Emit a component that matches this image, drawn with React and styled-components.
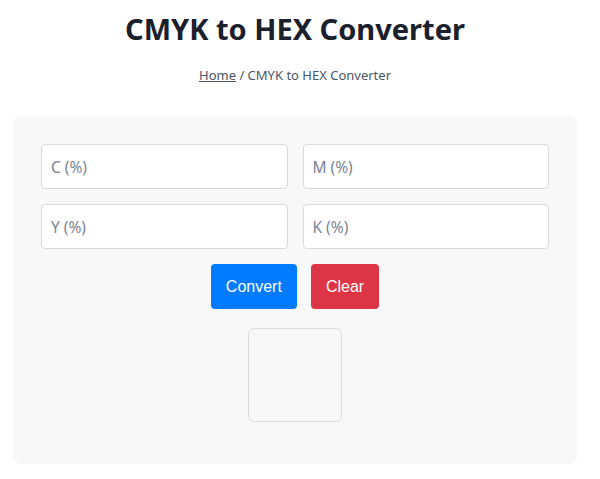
import styled, { createGlobalStyle } from "styled-components";

const GlobalStyle = createGlobalStyle`
  html, body { margin: 0; padding: 0; background: #fff; }
  body { font-family: "Noto Sans", "Open Sans", sans-serif; color: #1a202c; }
  * { box-sizing: border-box; }
`;

const Page = styled.div`
  padding: 0 23px 16px 13px;
`;

const Title = styled.h1`
  margin: 0;
  padding-top: 9px;
  text-align: center;
  font-size: 29px;
  line-height: 40px;
  font-weight: 700;
  color: #1a202c;
`;

const Crumbs = styled.nav`
  margin-top: 16px;
  text-align: center;
  font-size: 13px;
  line-height: 20px;
  color: #4a5568;
`;

const CrumbLink = styled.a`
  color: #4a5568;
  text-decoration: underline;
`;

const Card = styled.div`
  margin-top: 31px;
  background: #f8f8f8;
  border-radius: 8px;
  padding: 28px 28px 42px;
  display: flex;
  flex-direction: column;
  align-items: center;
`;

const Grid = styled.div`
  width: 100%;
  display: grid;
  grid-template-columns: 1fr 1fr;
  gap: 15px;
`;

const Input = styled.input`
  height: 45px;
  padding: 0 9px;
  border: 1px solid #d9d9d9;
  border-radius: 4px;
  background: #fff;
  font-family: "Noto Sans", "Open Sans", sans-serif;
  font-size: 15.5px;
  color: #1a202c;
  &::placeholder { color: #7a8494; }
`;

const Actions = styled.div`
  display: flex;
  gap: 14px;
  margin-top: 15px;
`;

const Button = styled.button`
  height: 45px;
  padding: 0 15px;
  border: none;
  border-radius: 4px;
  background: ${({ $variant }) => ($variant === "danger" ? "#dc3545" : "#007bff")};
  color: #fff;
  font-family: "Liberation Sans", Arial, sans-serif;
  font-size: 16px;
  cursor: pointer;
`;

const Swatch = styled.div`
  width: 94px;
  height: 94px;
  margin-top: 19px;
  border: 1px solid #dddddd;
  border-radius: 6px;
  background: #f8f8f8;
`;

export default function App() {
  return (
    <>
      <GlobalStyle />
      <Page>
        <Title>CMYK to HEX Converter</Title>
        <Crumbs>
          <CrumbLink href="#">Home</CrumbLink> / CMYK to HEX Converter
        </Crumbs>
        <Card>
          <Grid>
            <Input placeholder="C (%)" />
            <Input placeholder="M (%)" />
            <Input placeholder="Y (%)" />
            <Input placeholder="K (%)" />
          </Grid>
          <Actions>
            <Button>Convert</Button>
            <Button $variant="danger">Clear</Button>
          </Actions>
          <Swatch />
        </Card>
      </Page>
    </>
  );
}
